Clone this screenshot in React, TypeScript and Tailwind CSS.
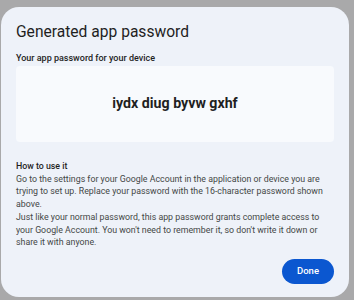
export default function App() {
  return (
    <main
      className="h-[300px] w-[354px] overflow-hidden bg-[#a9a9aa] pt-[7px] pl-px pr-[5px]"
      style={{ fontFamily: "Roboto, 'Noto Sans', sans-serif" }}
    >
      <div className="h-[290px] w-[348px] rounded-[18px] bg-[#eef2f9] px-[15px] pt-[13px]">
        <h1 className="text-[15.6px] leading-[24px] text-[#1f1f1f]">Generated app password</h1>
        <p className="mt-[8px] text-[9px] font-medium leading-[12px] text-[#1f1f1f]">
          Your app password for your device
        </p>
        <div className="mt-[2px] flex h-[76px] items-center justify-center rounded-[4px] bg-[#f8fafd]">
          <span className="text-[14.2px] font-bold text-[#1f1f1f]">iydx diug byvw gxhf</span>
        </div>
        <div className="mt-[18px] text-[8.8px] leading-[12.7px] text-[#444746]">
          <p className="font-medium text-[#1f1f1f]">How to use it</p>
          <p>
            Go to the settings for your Google Account in the application or device you are trying to set up.
            Replace your password with the 16-character password shown above.
          </p>
          <p>
            Just like your normal password, this app password grants complete access to your Google Account. You
            won't need to remember it, so don't write it down or share it with anyone.
          </p>
        </div>
        <div className="mt-[10px] flex justify-end">
          <button className="h-[25px] rounded-full bg-[#0b57d0] px-[15px] text-[9.5px] font-medium text-white">
            Done
          </button>
        </div>
      </div>
    </main>
  );
}
